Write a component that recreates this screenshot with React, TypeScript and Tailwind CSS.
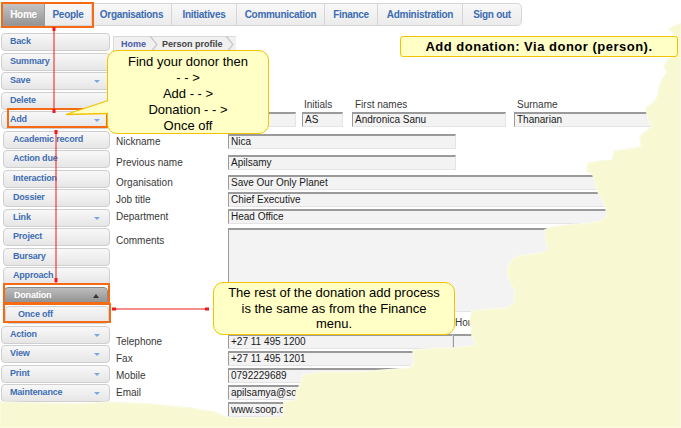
import React from "react";

const FONT = "font-['Liberation_Sans',Arial,sans-serif]";

function Input({ className = "", value = "" }: { className?: string; value?: string }) {
  return (
    <div
      className={
        "h-[15px] shrink-0 bg-[#f3f3f3] border-t-2 border-l border-r border-b border-t-[#9a9a9a] border-l-[#9a9a9a] border-r-[#e4e4e4] border-b-[#e4e4e4] pl-[2px] text-[10px] leading-[12px] text-[#1a1a1a] overflow-hidden whitespace-nowrap " +
        className
      }
    >
      {value}
    </div>
  );
}

function Label({ children, className = "" }: { children?: React.ReactNode; className?: string }) {
  return (
    <div className={"w-[115px] shrink-0 pl-[3px] text-[10px] leading-[12px] text-[#383838] whitespace-nowrap " + className}>
      {children}
    </div>
  );
}

type Tab = { l: string; w: string; active?: boolean; last?: boolean };
const tabs: Tab[] = [
  { l: "Home", w: "w-[42px]", active: true },
  { l: "People", w: "w-[47px]" },
  { l: "Organisations", w: "w-[80px]" },
  { l: "Initiatives", w: "w-[65px]" },
  { l: "Communication", w: "w-[88px]" },
  { l: "Finance", w: "w-[53px]" },
  { l: "Administration", w: "w-[85px]" },
  { l: "Sign out", w: "w-[59px]", last: true },
];

type Side = { l: string; lvl: "main" | "sub" | "don" | "subsub"; arrow?: boolean };
const side: Side[] = [
  { l: "Back", lvl: "main" },
  { l: "Summary", lvl: "main" },
  { l: "Save", lvl: "main", arrow: true },
  { l: "Delete", lvl: "main" },
  { l: "Add", lvl: "main", arrow: true },
  { l: "Academic record", lvl: "sub" },
  { l: "Action due", lvl: "sub" },
  { l: "Interaction", lvl: "sub" },
  { l: "Dossier", lvl: "sub" },
  { l: "Link", lvl: "sub", arrow: true },
  { l: "Project", lvl: "sub" },
  { l: "Bursary", lvl: "sub" },
  { l: "Approach", lvl: "sub" },
  { l: "Donation", lvl: "don" },
  { l: "Once off", lvl: "subsub" },
  { l: "Action", lvl: "main", arrow: true },
  { l: "View", lvl: "main", arrow: true },
  { l: "Print", lvl: "main", arrow: true },
  { l: "Maintenance", lvl: "main", arrow: true },
];

function SideBtn({ s }: { s: Side }) {
  const pos =
    s.lvl === "main"
      ? "ml-[1px] w-[109px] pl-[8px]"
      : s.lvl === "sub"
      ? "ml-[3px] w-[107px] pl-[9px]"
      : s.lvl === "don"
      ? "ml-[4px] w-[104px] pl-[9px]"
      : "ml-[5px] w-[104px] pl-[12px]";
  const look =
    s.lvl === "don"
      ? "bg-gradient-to-b from-[#bdbdbd] to-[#8e8e8e] border-[#8a8a8a] text-white"
      : s.lvl === "subsub"
      ? "bg-gradient-to-b from-[#f6f6f6] to-[#e6e6e6] border-[#d2d2d2] text-[#3b6fb6]"
      : "bg-gradient-to-b from-[#f8f8f8] to-[#e6e6e6] border-[#cfcfcf] text-[#3f6db3]";
  return (
    <div
      className={
        "relative h-[18px] shrink-0 flex items-center rounded-[4px] border text-[9px] font-bold tracking-[-0.2px] " +
        pos +
        " " +
        look
      }
    >
      {s.l}
      {s.arrow && (
        <div className="absolute right-[9px] top-[7px] w-0 h-0 border-l-[3px] border-r-[3px] border-t-[3px] border-l-transparent border-r-transparent border-t-[#7aa8dc]" />
      )}
      {s.lvl === "don" && (
        <div className="absolute right-[8px] top-[6px] w-0 h-0 border-l-[3px] border-r-[3px] border-b-[4px] border-l-transparent border-r-transparent border-b-[#333333]" />
      )}
    </div>
  );
}

export default function App() {
  const tearPts =
    "681,24 674,26 669,29 672,32 676,36 676,45 673,55 668,60 664,66 667,72 662,80 659,88 658,95 654,102 646,108 648,118 652,126 645,132 640,136 641,147 628,149 614,151 612,160 600,161 588,163 587,171 593,175 596,186 598,192 603,200 606,209 607,216 600,221 590,223 568,225 552,227 545,230 546,240 548,250 540,253 518,256 510,262 507,270 510,283 515,290 514,303 508,308 490,309 472,311 470,320 472,335 476,345 455,348 440,348 413,350 414,362 410,368 360,372 320,372 303,375 300,385 296,392 296,400 284,402 283,417 240,418 226,417 215,412 190,408 150,404 110,402 80,404 40,403 0,402 0,428 681,428";

  return (
    <div className={"relative w-[681px] h-[428px] overflow-hidden bg-white " + FONT}>
      {/* Top tabs */}
      <div className="flex h-[23px] mt-[3px] ml-[3px]">
        {tabs.map((t) => (
          <div
            key={t.l}
            className={
              "h-full shrink-0 flex items-center justify-center text-[10px] font-bold tracking-[-0.3px] border-y border-r " +
              t.w +
              " " +
              (t.active
                ? "bg-gradient-to-b from-[#c4c4c4] to-[#959595] text-white border-[#9a9a9a]"
                : "bg-gradient-to-b from-[#f8f8f8] to-[#ebebeb] text-[#3d6cb3] border-[#d6d6d6]") +
              (t.last ? " rounded-r-[5px]" : "")
            }
          >
            {t.l}
          </div>
        ))}
      </div>

      {/* Body */}
      <div className="flex mt-[5px]">
        {/* Sidebar */}
        <div className="flex flex-col gap-[1.5px] w-[110px] shrink-0 mt-[2px]">
          {side.map((s) => (
            <SideBtn key={s.l + s.lvl} s={s} />
          ))}
        </div>

        {/* Main */}
        <div className="ml-[3px] mt-[5px] w-[568px] flex flex-col">
          {/* Breadcrumb */}
          <div className="flex items-center h-[17px] w-fit bg-[#f0f0f0] border-y border-l border-[#dadada] text-[9px] font-bold">
            <span className="pl-[7px] text-[#4a5aa8]">Home</span>
            <svg width="12" height="17" viewBox="0 0 12 17" className="ml-[2px]">
              <polyline points="2,0 9,8.5 2,17" fill="none" stroke="#c6c6c6" strokeWidth="1.2" />
            </svg>
            <span className="pl-[2px] text-[#444]">Person profile</span>
            <svg width="12" height="17" viewBox="0 0 12 17" className="ml-[1px]">
              <polyline points="2,0 9,8.5 2,17" fill="none" stroke="#c6c6c6" strokeWidth="1.2" />
            </svg>
          </div>

          {/* Name headers */}
          <div className="flex mt-[46px] h-[12px] pl-[114px] text-[10px] leading-[12px] text-[#383838]">
            <div className="w-[69px] shrink-0" />
            <div className="w-[41px] shrink-0 ml-[6px] pl-[2px]">Initials</div>
            <div className="w-[154px] shrink-0 ml-[9px] pl-[3px]">First names</div>
            <div className="w-[166px] shrink-0 ml-[8px] pl-[3px]">Surname</div>
          </div>
          <div className="flex mt-[1px] pl-[114px]">
            <Input className="w-[69px]" />
            <Input className="w-[41px] ml-[6px]" value="AS" />
            <Input className="w-[154px] ml-[9px]" value="Andronica Sanu" />
            <Input className="w-[166px] ml-[8px]" value="Thanarian" />
          </div>

          <div className="flex items-center mt-[7px]">
            <Label>Nickname</Label>
            <Input className="w-[228px]" value="Nica" />
          </div>
          <div className="flex items-center mt-[6px]">
            <Label>Previous name</Label>
            <Input className="w-[228px]" value="Apilsamy" />
          </div>
          <div className="flex items-center mt-[5px]">
            <Label>Organisation</Label>
            <Input className="w-[440px]" value="Save Our Only Planet" />
          </div>
          <div className="flex items-center mt-[2px]">
            <Label>Job title</Label>
            <Input className="w-[440px]" value="Chief Executive" />
          </div>
          <div className="flex items-center mt-[2px]">
            <Label>Department</Label>
            <Input className="w-[440px]" value="Head Office" />
          </div>
          <div className="flex items-start mt-[4px]">
            <Label className="pt-[7px]">Comments</Label>
            <Input className="w-[440px] h-[84px]" />
          </div>
          <div className="flex mt-[5px] h-[12px] pl-[342px] text-[10px] leading-[12px] text-[#383838]">
            Home
          </div>
          <div className="flex items-center mt-[5px]">
            <Label>Telephone</Label>
            <Input className="w-[225px]" value="+27 11 495 1200" />
            <Input className="w-[200px]" />
          </div>
          <div className="flex items-center mt-[2px]">
            <Label>Fax</Label>
            <Input className="w-[187px]" value="+27 11 495 1201" />
          </div>
          <div className="flex items-center mt-[2px]">
            <Label>Mobile</Label>
            <Input className="w-[184px]" value="0792229689" />
          </div>
          <div className="flex items-center mt-[2px]">
            <Label>Email</Label>
            <Input className="w-[187px]" value="apilsamya@soop.org.za" />
          </div>
          <div className="flex items-center mt-[2px]">
            <Label>Website</Label>
            <Input className="w-[187px]" value="www.soop.org.za" />
          </div>
        </div>
      </div>

      {/* Torn paper edge */}
      <svg className="absolute inset-0 pointer-events-none" width="681" height="428" viewBox="0 0 681 428">
        <polygon points={tearPts} fill="#f8f8d3" stroke="#fafae4" strokeWidth="1.5" />
      </svg>

      {/* Orange highlight boxes */}
      <div className="absolute left-[1px] top-[2px] w-[93px] h-[26px] border-2 border-[#f56a12]" />
      <div className="absolute left-[7px] top-[108px] w-[101px] h-[20px] border-2 border-[#f56a12]" />
      <div className="absolute left-[3px] top-[283px] w-[107px] h-[21px] border-2 border-[#f56a12]" />
      <div className="absolute left-[3px] top-[303px] w-[108px] h-[20px] border-2 border-[#f56a12]" />

      {/* Red connector lines */}
      <svg className="absolute inset-0 pointer-events-none" width="681" height="428" viewBox="0 0 681 428">
        <line x1="54" y1="28" x2="54" y2="111" stroke="#ee1a1a" strokeWidth="1" />
        <rect x="52.5" y="27" width="3" height="4" fill="#ee1a1a" />
        <rect x="52.5" y="109" width="3" height="4" fill="#ee1a1a" />
        <line x1="56" y1="131" x2="56" y2="283" stroke="#ee1a1a" strokeWidth="1" />
        <rect x="54.5" y="130" width="3" height="4" fill="#ee1a1a" />
        <rect x="54.5" y="278" width="3" height="4" fill="#ee1a1a" />
        <line x1="112" y1="309" x2="208" y2="309" stroke="#ee1a1a" strokeWidth="1" />
        <rect x="112" y="307.5" width="4" height="3" fill="#ee1a1a" />
        <rect x="205" y="307.5" width="4" height="3" fill="#ee1a1a" />
      </svg>

      {/* Callout: Add donation header */}
      <div className="absolute left-[400px] top-[36px] w-[278px] h-[21px] rounded-[3px] bg-[#ffffc6] border-[1.5px] border-[#f2c400] flex items-center justify-center text-[13px] font-bold tracking-[0.5px] text-black">
        Add donation: Via donor (person).
      </div>

      {/* Callout 1 */}
      <div className="absolute left-[107px] top-[50px] w-[162px] h-[84px] rounded-[10px] bg-[#ffffc6] border-[1.5px] border-[#f2c400] pt-[3px] text-center text-[13px] leading-[16px] text-black">
        <div>Find your donor then</div>
        <div>- - &gt;</div>
        <div>Add - - &gt;</div>
        <div>Donation - - &gt;</div>
        <div>Once off</div>
      </div>
      <svg className="absolute inset-0 pointer-events-none" width="681" height="428" viewBox="0 0 681 428">
        <path d="M110 100.5 L67 114 L110 113.5 Z" fill="#ffffc6" />
        <path d="M108 100.5 L66 114.5 L108 113.5" fill="none" stroke="#f2c400" strokeWidth="1.3" />
      </svg>

      {/* Callout 2 */}
      <div className="absolute left-[213px] top-[282px] w-[242px] h-[53px] rounded-[10px] bg-[#ffffc6] border-[1.5px] border-[#f2c400] pt-[2px] text-center text-[13px] leading-[15.5px] text-black">
        <div>The rest of the donation add process</div>
        <div>is the same as from the Finance</div>
        <div>menu.</div>
      </div>
    </div>
  );
}
